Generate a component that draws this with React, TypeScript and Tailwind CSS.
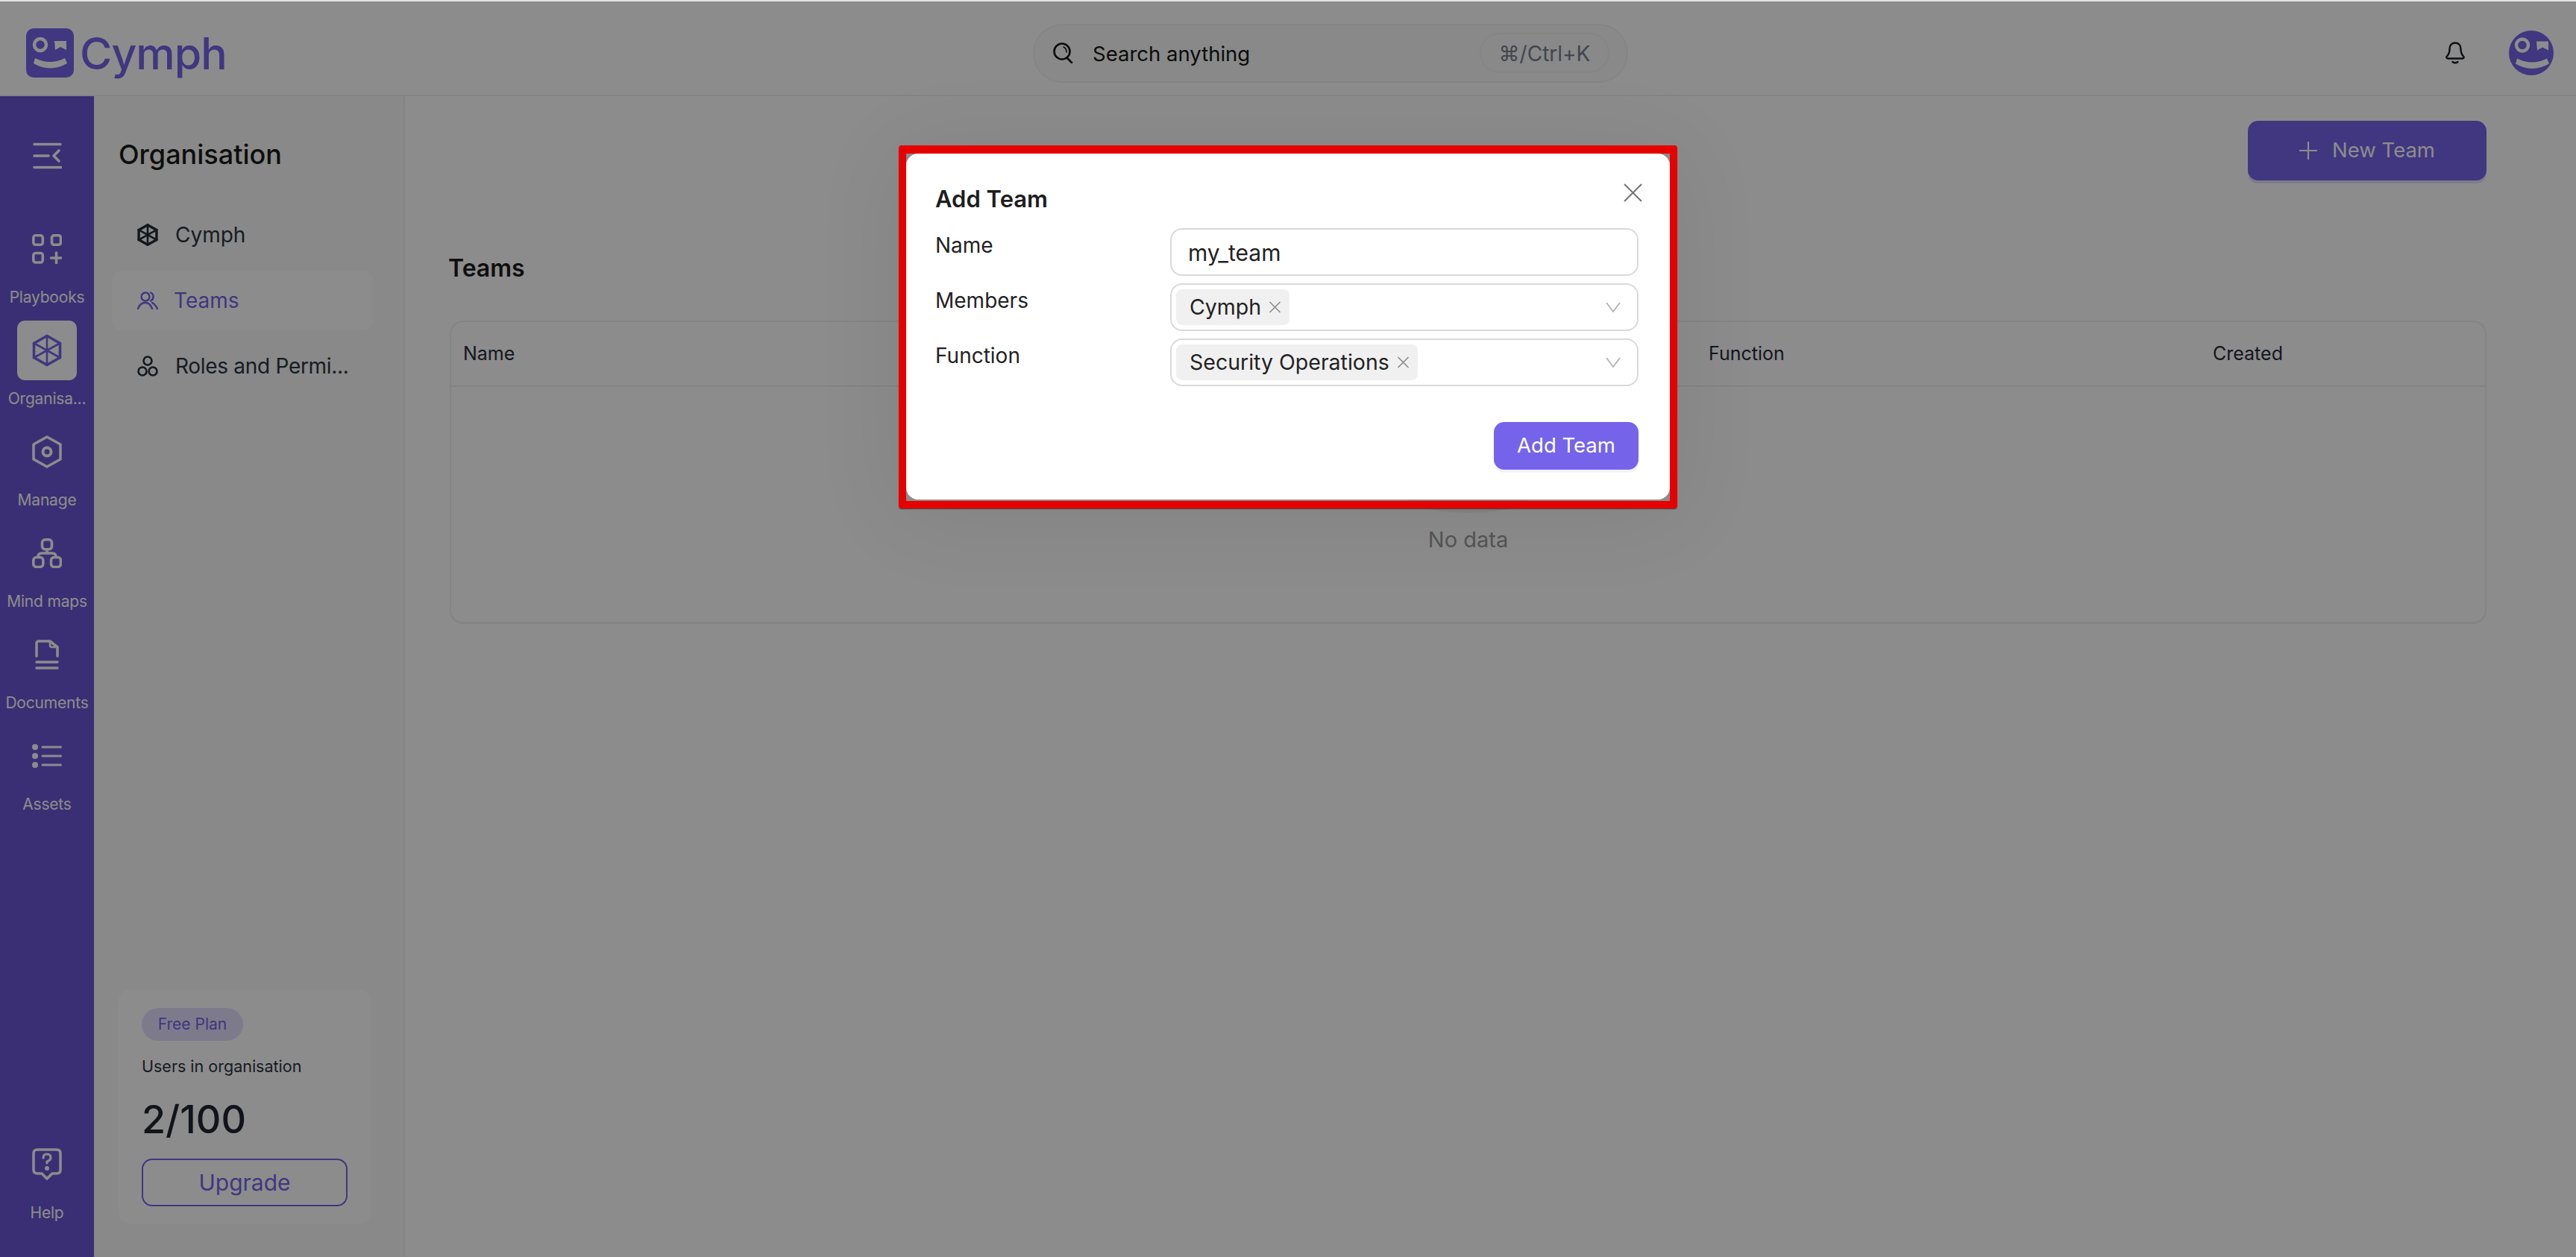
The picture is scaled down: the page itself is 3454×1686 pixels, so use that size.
import React from "react";

const primary = "#7564ea";

function Face({ round, className }: { round?: boolean; className?: string }) {
  return (
    <svg viewBox={round ? "0 0 60 60" : "0 0 64 66"} className={className}>
      {round ? <circle cx="30" cy="30" r="30" fill={primary} /> : <rect width="64" height="66" rx="10" fill={primary} />}
      <g transform={round ? "translate(-1 -2.5)" : undefined}>
        <circle cx="19" cy="22" r="8" fill="none" stroke="#fff" strokeWidth="4.5" />
        <path d="M38 17H54V29L46 25L39 29Z" fill="#fff" />
        <path d="M12 40Q32 50 52 40L55 47Q32 60 10 47Z" fill="#fff" />
      </g>
    </svg>
  );
}

function Cube({ color, className, thick }: { color: string; className?: string; thick?: boolean }) {
  return (
    <svg viewBox="0 0 40 44" fill="none" stroke={color} strokeLinejoin="round" strokeLinecap="round" className={className}>
      <path d="M20 2.5L37.5 12.5V31.5L20 41.5L2.5 31.5V12.5Z" strokeWidth={thick ? 5 : 3.6} />
      <path d="M20 2V42M2 12L38 32M38 12L2 32" strokeWidth={thick ? 4 : 2.6} />
    </svg>
  );
}

function Ico({ children, h = 40 }: { children: React.ReactNode; h?: number }) {
  return (
    <svg viewBox={`0 0 40 ${h}`} width="40" height={h} fill="none" stroke="#fff" strokeWidth="3.6" strokeLinecap="round" strokeLinejoin="round">
      {children}
    </svg>
  );
}

const sideItems = [
  {
    label: "Playbooks",
    icon: (
      <Ico>
        <rect x="1.8" y="1.8" width="12.5" height="12.5" rx="3" />
        <rect x="26.5" y="1.8" width="12" height="12.5" rx="3" />
        <rect x="1.8" y="25.5" width="12.5" height="12.5" rx="3" />
        <path d="M32.5 25V39M25.5 32H39" />
      </Ico>
    ),
  },
  { label: "Organisa...", active: true, icon: <Cube color={primary} className="w-10 h-11" /> },
  {
    label: "Manage",
    icon: (
      <Ico h={44}>
        <path d="M20 2L38 12V32L20 42L2 32V12Z" />
        <circle cx="20" cy="22" r="5.5" strokeWidth="4" />
      </Ico>
    ),
  },
  {
    label: "Mind maps",
    icon: (
      <Ico>
        <rect x="13.5" y="1.8" width="13" height="13" rx="4" />
        <rect x="1.8" y="25.5" width="13" height="13" rx="4" />
        <rect x="25.5" y="25.5" width="13" height="13" rx="4" />
        <path d="M20 15V20M8 25Q8 20 13 20H27Q32 20 32 25" />
      </Ico>
    ),
  },
  {
    label: "Documents",
    icon: (
      <Ico>
        <path d="M6 22V5Q6 2 9 2H24L34 10V22" />
        <path d="M24 3V8Q24 10 27 10H33" strokeWidth="2.6" />
        <path d="M6 30H34M6 38H34" />
      </Ico>
    ),
  },
  {
    label: "Assets",
    icon: (
      <Ico h={32}>
        <circle cx="4" cy="4" r="2.2" fill="#fff" />
        <circle cx="4" cy="16" r="2.2" fill="#fff" />
        <circle cx="4" cy="28" r="2.2" fill="#fff" />
        <path d="M14 4H38.5M14 16H38.5M14 28H38.5" strokeWidth="3" />
      </Ico>
    ),
  },
];

function SideItem({ label, icon, active }: { label: string; icon: React.ReactNode; active?: boolean }) {
  return (
    <div className="h-[136px] flex flex-col items-center">
      <div className={"w-20 h-20 shrink-0 rounded-[10px] flex items-center justify-center " + (active ? "bg-white" : "")}>{icon}</div>
      <div className="text-[21px] leading-[50px] tracking-[-0.2px] text-white whitespace-nowrap">{label}</div>
    </div>
  );
}

function Sidebar() {
  return (
    <aside className="w-[126px] shrink-0 bg-[#6b57d3] flex flex-col pb-[28px]">
      <div className="h-[165px] shrink-0 flex justify-center pt-[60px]">
        <Ico>
          <path d="M3 4.5H38M3 20H22M3 35.5H39" />
          <path d="M36 13L29 20L36 27" />
        </Ico>
      </div>
      {sideItems.map((it) => (
        <SideItem key={it.label} {...it} />
      ))}
      <div className="mt-auto">
        <SideItem
          label="Help"
          icon={
            <Ico h={44}>
              <path d="M7 2H33Q38 2 38 7V29Q38 34 33 34H27L20 41L13 34H7Q2 34 2 29V7Q2 2 7 2Z" />
              <path d="M15 13Q15 8 20 8Q25 8 25 13Q25 16 20 18V20" strokeWidth="3.2" />
              <circle cx="20" cy="27" r="1.2" fill="#fff" />
            </Ico>
          }
        />
      </div>
    </aside>
  );
}

function SubNav() {
  return (
    <div className="w-[417px] shrink-0 border-r-2 border-[#f0f1f0] bg-[#f7faf7] flex flex-col">
      <div className="h-[146px] shrink-0 pl-[33px] pt-[56px] text-[36px] leading-[44px] font-medium text-[#1a1a1a]">Organisation</div>
      <div className="ml-[24px] w-[350px] flex flex-col gap-2 text-[28px] text-[#2b3440]">
        <div className="h-20 rounded-[14px] pl-[34px] flex items-center gap-[23px]">
          <Cube thick color="#242d38" className="w-[28px] h-[30px]" />
          <span>Cymph</span>
        </div>
        <div className="h-20 rounded-[14px] pl-[34px] flex items-center gap-[21px] bg-white text-[#7564ea]">
          <svg viewBox="0 0 28 24" width="28" height="24" fill="none" stroke={primary} strokeWidth="2.4" strokeLinecap="round">
            <circle cx="11" cy="7" r="5.5" />
            <path d="M18 1.5Q22 3 21.5 8Q21 11 18 12.5" />
            <path d="M1 23Q4 15 11 15Q17 15 20 23M20 15Q24 17 27 23" />
          </svg>
          <span>Teams</span>
        </div>
        <div className="h-20 rounded-[14px] pl-[34px] flex items-center gap-[23px]">
          <svg viewBox="0 0 28 28" width="28" height="28" fill="none" stroke="#242d38" strokeWidth="2.6">
            <circle cx="14" cy="7" r="5.5" />
            <circle cx="7" cy="21" r="5.5" />
            <circle cx="21" cy="21" r="5.5" />
          </svg>
          <span className="whitespace-nowrap tracking-[-0.3px]">Roles and Permi...</span>
        </div>
      </div>
      <div className="mt-auto mb-[44px] ml-[32px] w-[340px] h-[315px] rounded-[18px] bg-white pl-[32px] pt-[25px]">
        <div className="w-[136px] h-[44px] rounded-full bg-[#e3e0fd] text-[#7564ea] text-[21px] flex items-center justify-center">Free Plan</div>
        <div className="mt-[18px] text-[21.5px] leading-[32px] text-[#2b3440] whitespace-nowrap">Users in organisation</div>
        <div className="mt-[24px] text-[52px] leading-[64px] font-medium text-[#1f2730]">2/100</div>
        <div className="mt-[20px] w-[276px] h-[64px] rounded-[14px] border-2 border-[#7564ea] text-[#7564ea] text-[30px] flex items-center justify-center">Upgrade</div>
      </div>
    </div>
  );
}

function Main() {
  return (
    <main className="flex-1 min-w-0 bg-white pl-[60px] pr-[120px]">
      <div className="mt-[33px] flex justify-end">
        <div className="w-[320px] h-20 rounded-[14px] bg-[#7564ea] shadow-[0_4px_0_#e3e0fd] text-white text-[27.5px] flex items-center justify-center gap-[20px]">
          <svg viewBox="0 0 24 24" width="24" height="24" stroke="#fff" strokeWidth="2.2">
            <path d="M12 0V24M0 12H24" />
          </svg>
          <span>New Team</span>
        </div>
      </div>
      <div className="mt-[97px] -ml-[2px] text-[32px] leading-[42px] font-semibold text-[#1c1c1c]">Teams</div>
      <div className="mt-[49px] h-[407px] rounded-[18px] border-2 border-b-[3px] border-[#f0f0f0] flex flex-col">
        <div className="h-[87px] shrink-0 border-b-2 border-[#f0f0f0] pl-[16px] grid grid-cols-[835px_835px_676px_1fr] items-center text-[25px] text-[#272a38]">
          <span>Name</span>
          <span>Members</span>
          <span>Function</span>
          <span>Created</span>
        </div>
        <div className="flex-1 flex flex-col items-center">
          <svg viewBox="0 0 184 117" width="184" height="117" className="mt-[52px] shrink-0" fill="none">
            <ellipse cx="92" cy="96" rx="82" ry="21" fill="#f5f5f5" />
            <path d="M47 10V80H137V10" stroke="#d9d9d9" strokeWidth="2" />
          </svg>
          <div className="mt-[16px] text-[29px] leading-[40px] text-[#9b9b9b]">No data</div>
        </div>
      </div>
    </main>
  );
}

function Header() {
  return (
    <header className="h-[127px] shrink-0 border-b-2 border-[#f0f0f0] bg-white flex items-center pt-[13px]">
      <div className="w-[1385px] shrink-0 pl-[35px] flex items-center gap-[8px]">
        <Face className="w-[64px] h-[66px]" />
        <span className="text-[59px] leading-none font-medium tracking-[-1px] text-[#7564ea]">Cymph</span>
      </div>
      <div className="w-[798px] h-[79px] rounded-full border-2 border-[#f0f2f0] bg-[#f7faf7] flex items-center pl-[24px] pr-[23px]">
        <svg viewBox="0 0 28 28" width="28" height="28" fill="none" stroke="#141414" strokeWidth="2.6" strokeLinecap="round">
          <circle cx="13" cy="12" r="10.5" />
          <path d="M20 21L26 27" />
          <path d="M15 6Q19 8 19 13" strokeWidth="1.6" />
        </svg>
        <span className="ml-[26px] pt-[3px] text-[27.5px] text-[#141414]">Search anything</span>
        <div className="ml-auto w-[174px] h-[54px] pt-[2px] rounded-full border-2 border-[#f0f2f0] text-[28px] text-[#7a7f91] flex items-center justify-center">⌘/Ctrl+K</div>
      </div>
      <div className="ml-auto flex items-center gap-[59px] pr-[30px]">
        <svg viewBox="0 0 26 30" width="26" height="30" fill="none" stroke="#161a22" strokeWidth="2.4" strokeLinecap="round" strokeLinejoin="round">
          <path d="M13 1.5C8 1.5 5.5 5.5 5.5 10C5.5 15 3.5 18 1.5 20Q1 22.5 3.5 22.5H22.5Q25 22.5 24.5 20C22.5 18 20.5 15 20.5 10C20.5 5.5 18 1.5 13 1.5Z" />
          <path d="M9.5 27Q13 29.5 16.5 27" />
        </svg>
        <Face round className="w-[60px] h-[60px]" />
      </div>
    </header>
  );
}

function Chip({ label }: { label: string }) {
  return (
    <div className="h-[48px] rounded-lg bg-[#f0f0f0] pl-[18px] pr-[11px] flex items-center gap-[10px] text-[28.5px] text-[#222]">
      <span className="whitespace-nowrap">{label}</span>
      <svg viewBox="0 0 16 16" width="17" height="16" stroke="#8a8a8a" strokeWidth="1.6">
        <path d="M1 1L15 15M15 1L1 15" />
      </svg>
    </div>
  );
}

function SelectBox({ label }: { label: string }) {
  return (
    <div className="h-[64px] rounded-[16px] border-2 border-[#d9d9d9] pl-[6px] pr-[22px] flex items-center justify-between">
      <Chip label={label} />
      <svg viewBox="0 0 20 14" width="20" height="14" fill="none" stroke="#b3b3b3" strokeWidth="1.8">
        <path d="M1 1L10 13L19 1" />
      </svg>
    </div>
  );
}

function Modal() {
  return (
    <div className="absolute left-[1205px] top-[195px] w-[1044px] h-[487px] rounded-[4px] border-x-[10px] border-t-[11px] border-b-[10px] border-[#e60000] shadow-[0_1px_1px_rgba(0,0,0,0.5),0_10px_120px_rgba(0,0,0,0.08)]">
      <div className="relative h-[464px] rounded-[16px] bg-white pl-[39px]">
        <svg viewBox="0 0 25 25" width="25" height="25" stroke="#737373" strokeWidth="2" className="absolute right-[37px] top-[40px]">
          <path d="M1 1L24 24M24 1L1 24" />
        </svg>
        <div className="pt-[42px] text-[31px] leading-[38px] font-semibold text-[#1e1e1e]">Add Team</div>
        <div className="mt-[20px] grid grid-cols-[315px_628px] gap-y-[10px] text-[28px] text-[#222]">
          <div className="leading-[46px]">Name</div>
          <div className="h-[64px] rounded-[16px] border-2 border-[#d9d9d9] pl-[22px] flex items-center pt-[3px] text-[30px]">my_team</div>
          <div className="leading-[46px]">Members</div>
          <SelectBox label="Cymph" />
          <div className="leading-[46px]">Function</div>
          <SelectBox label="Security Operations" />
        </div>
        <div className="mt-[48px] ml-[315px] w-[628px] flex justify-end">
          <div className="w-[194px] h-[64px] rounded-[14px] bg-[#7564ea] shadow-[0_4px_0_#f4f2fe] text-white text-[27.5px] flex items-center justify-center">Add Team</div>
        </div>
      </div>
    </div>
  );
}

export default function App() {
  return (
    <div className="relative w-full h-[1686px] overflow-hidden flex flex-col bg-white font-['Inter',sans-serif]">
      <div className="h-[2px] shrink-0 bg-[#e2e2e2]" />
      <Header />
      <div className="flex-1 min-h-0 flex">
        <Sidebar />
        <SubNav />
        <Main />
      </div>
      <div className="absolute inset-x-0 top-[2px] bottom-0 bg-black/45" />
      <Modal />
    </div>
  );
}
